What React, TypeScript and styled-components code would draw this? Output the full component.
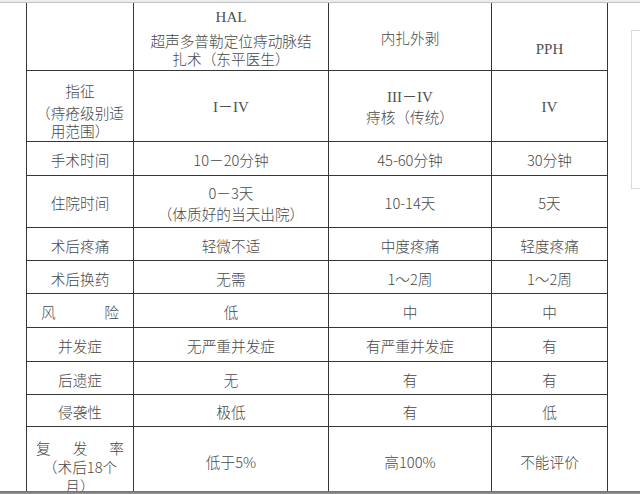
import { ReactNode } from 'react'
import styled, { createGlobalStyle } from 'styled-components'

const GlobalStyle = createGlobalStyle`
  html, body {
    margin: 0;
    padding: 0;
    background: #ffffff;
  }
  body {
    width: 640px;
    height: 494px;
    overflow: hidden;
    font-family: "Noto Sans CJK SC", "Noto Sans", sans-serif;
    font-weight: 300;
    color: #474747;
  }
`

const Page = styled.div`
  width: 640px;
  height: 494px;
  display: flex;
  flex-direction: column;
  overflow: hidden;
`

const TopRule = styled.div`
  flex-shrink: 0;
  height: 2px;
  background: #ececec;
  border-bottom: 1px solid #c2c2c2;
`

const Main = styled.div`
  flex: 1;
  min-height: 0;
  display: flex;
  overflow: hidden;
`

const Sheet = styled.div`
  flex-shrink: 0;
  margin-left: 26px;
  width: 582px;
`

const Grid = styled.table`
  width: 582px;
  table-layout: fixed;
  border-collapse: collapse;
  font-size: 14.67px;
`

const Row = styled.tr<{ $h: number }>`
  height: ${({ $h }) => $h}px;
`

const Cell = styled.td<{ $top?: boolean; $shift?: number }>`
  padding: ${({ $shift = 0 }) => ($shift > 0 ? $shift : 0) + 3}px 0
    ${({ $shift = 0 }) => ($shift < 0 ? -$shift : 0)}px;
  border: 1px solid #363636;
  border-top: ${({ $top }) => ($top ? 'none' : '1px solid #363636')};
  text-align: center;
  vertical-align: middle;
  line-height: 19px;
  white-space: nowrap;
`

const Lines = styled.div<{ $lh: number }>`
  line-height: ${({ $lh }) => $lh}px;
`

const FirstLine = styled.div`
  line-height: 26px;
`

const Roman = styled.div<{ $gap?: number }>`
  font-family: "Liberation Serif", "Noto Sans CJK SC", serif;
  font-weight: 400;
  font-size: 15px;
  color: #505050;
  line-height: 20px;
  margin-bottom: ${({ $gap = 0 }) => $gap}px;
`

const Spread = styled.div<{ $pad: number }>`
  display: flex;
  justify-content: space-between;
  padding: 0 ${({ $pad }) => $pad}px;
`

const SidePanel = styled.div`
  flex-shrink: 0;
  margin-left: auto;
  margin-top: 27px;
  width: 8px;
  height: 157px;
  border: 1px solid #dadada;
  border-right: none;
`

const BottomBar = styled.div`
  flex-shrink: 0;
  height: 3px;
  background: linear-gradient(#6a6a6a, #9c9c9c);
`

type SimpleRow = {
  label: ReactNode
  h: number
  cells: ReactNode[]
}

const rows: SimpleRow[] = [
  { label: '手术时间', h: 34, cells: ['10－20分钟', '45-60分钟', '30分钟'] },
  {
    label: '住院时间',
    h: 52,
    cells: [
      <>
        0－3天
        <br />
        （体质好的当天出院）
      </>,
      '10-14天',
      '5天',
    ],
  },
  { label: '术后疼痛', h: 33, cells: ['轻微不适', '中度疼痛', '轻度疼痛'] },
  { label: '术后换药', h: 33, cells: ['无需', '1～2周', '1～2周'] },
  {
    label: (
      <Spread $pad={14}>
        <span>风</span>
        <span>险</span>
      </Spread>
    ),
    h: 34,
    cells: ['低', '中', '中'],
  },
  { label: '并发症', h: 34, cells: ['无严重并发症', '有严重并发症', '有'] },
  { label: '后遗症', h: 33, cells: ['无', '有', '有'] },
  { label: '侵袭性', h: 32, cells: ['极低', '有', '低'] },
]

const App = () => {
  return (
    <>
      <GlobalStyle />
      <Page>
        <TopRule />
        <Main>
          <Sheet>
            <Grid>
              <colgroup>
                <col style={{ width: 107 }} />
                <col style={{ width: 195 }} />
                <col style={{ width: 163 }} />
                <col style={{ width: 116 }} />
              </colgroup>
              <tbody>
                <Row $h={67}>
                  <Cell $top />
                  <Cell $top>
                    <Roman $gap={5}>HAL</Roman>
                    <Lines $lh={18}>
                      超声多普勒定位痔动脉结
                      <br />
                      扎术（东平医生）
                    </Lines>
                  </Cell>
                  <Cell $top>内扎外剥</Cell>
                  <Cell $top $shift={22}>
                    <Roman>PPH</Roman>
                  </Cell>
                </Row>
                <Row $h={71}>
                  <Cell $shift={4}>
                    <Lines $lh={18}>
                      <FirstLine>指征</FirstLine>
                      （痔疮级别适
                      <br />
                      用范围）
                    </Lines>
                  </Cell>
                  <Cell>
                    <Roman>I－IV</Roman>
                  </Cell>
                  <Cell>
                    <Roman>III－IV</Roman>
                    <Lines $lh={20}>痔核（传统）</Lines>
                  </Cell>
                  <Cell>
                    <Roman>IV</Roman>
                  </Cell>
                </Row>
                {rows.map((r, i) => (
                  <Row key={i} $h={r.h}>
                    <Cell>{r.label}</Cell>
                    {r.cells.map((c, j) => (
                      <Cell key={j}>
                        <Lines $lh={21}>{c}</Lines>
                      </Cell>
                    ))}
                  </Row>
                ))}
                <Row $h={80}>
                  <Cell $shift={-2}>
                    <Spread $pad={9}>
                      <span>复</span>
                      <span>发</span>
                      <span>率</span>
                    </Spread>
                    <Lines $lh={19}>
                      （术后18个
                      <br />
                      月）
                    </Lines>
                  </Cell>
                  <Cell $shift={-12}>低于5%</Cell>
                  <Cell $shift={-12}>高100%</Cell>
                  <Cell $shift={-12}>不能评价</Cell>
                </Row>
              </tbody>
            </Grid>
          </Sheet>
          <SidePanel />
        </Main>
        <BottomBar />
      </Page>
    </>
  )
}

export default App
